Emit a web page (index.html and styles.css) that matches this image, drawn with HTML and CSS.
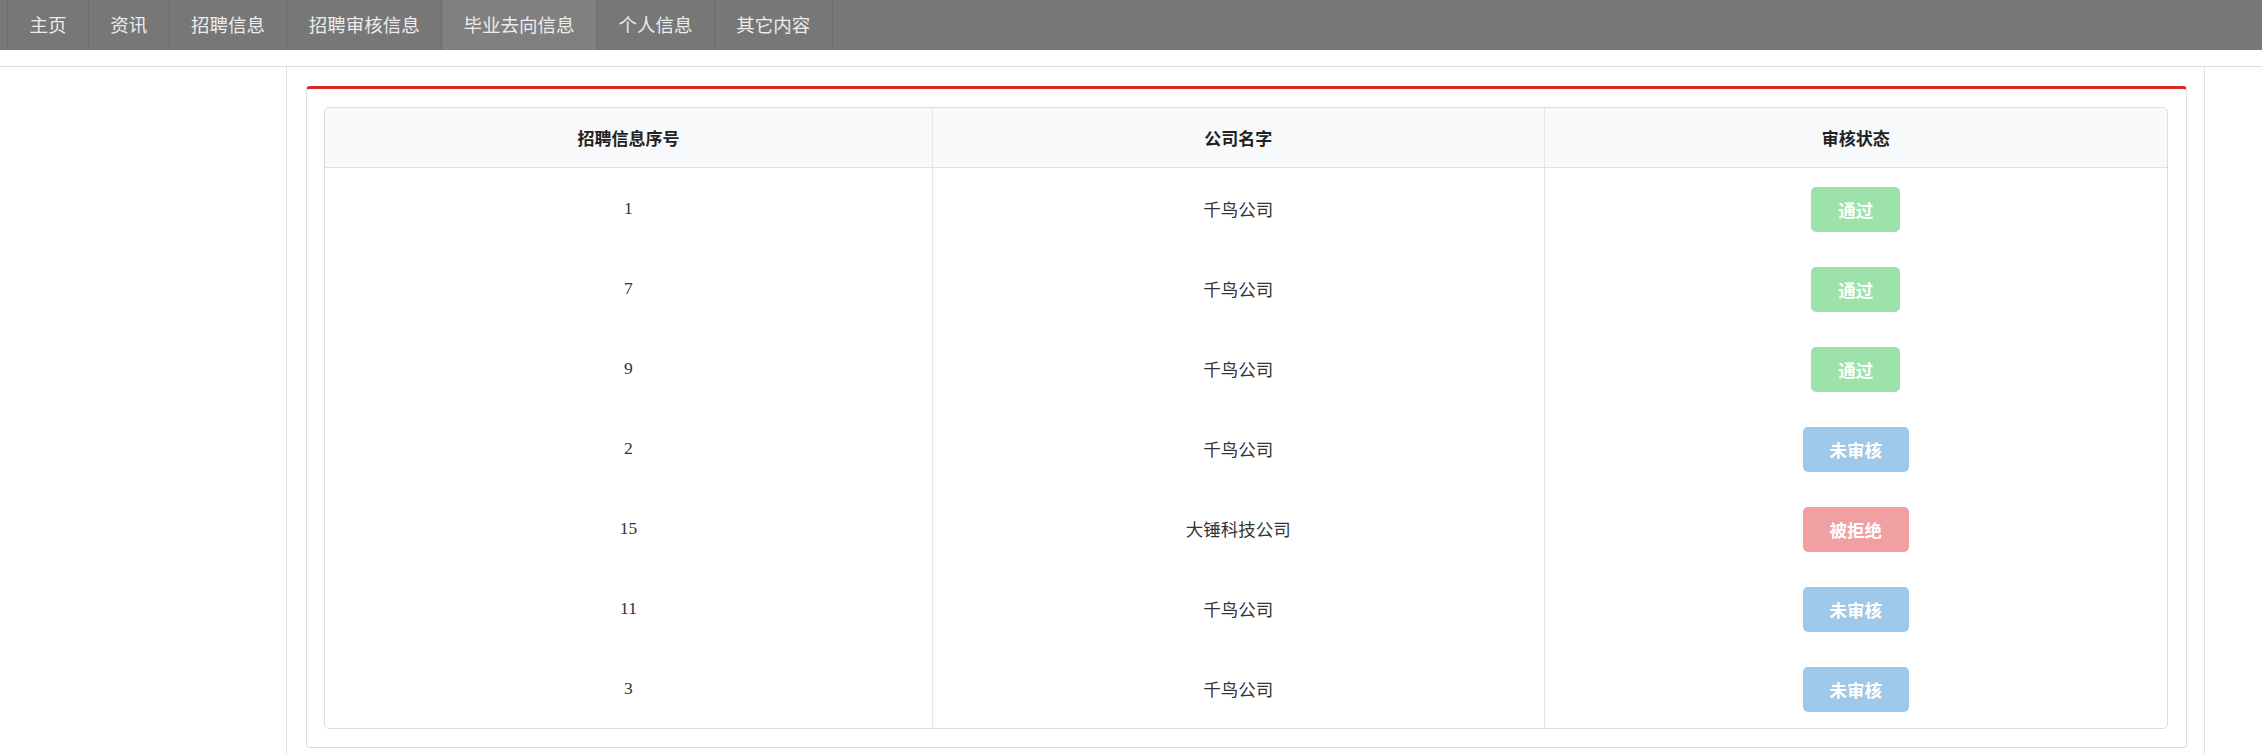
FILE: index.html
```html
<!DOCTYPE html>
<html lang="zh-CN">
<head>
<meta charset="utf-8">
<title>审核状态</title>
<link rel="stylesheet" href="styles.css">
</head>
<body>
<nav class="topnav">
  <ul class="menu">
    <li class="menu-item">主页</li>
    <li class="menu-item">资讯</li>
    <li class="menu-item">招聘信息</li>
    <li class="menu-item">招聘审核信息</li>
    <li class="menu-item active">毕业去向信息</li>
    <li class="menu-item">个人信息</li>
    <li class="menu-item">其它内容</li>
  </ul>
</nav>
<div class="layout">
  <aside class="sidebar"></aside>
  <main class="main">
    <section class="panel">
      <div class="table-wrap">
        <table class="status-table">
          <thead>
            <tr>
              <th class="c1">招聘信息序号</th>
              <th class="c2">公司名字</th>
              <th class="c3">审核状态</th>
            </tr>
          </thead>
          <tbody>
            <tr><td>1</td><td>千鸟公司</td><td><span class="badge ok">通过</span></td></tr>
            <tr><td>7</td><td>千鸟公司</td><td><span class="badge ok">通过</span></td></tr>
            <tr><td>9</td><td>千鸟公司</td><td><span class="badge ok">通过</span></td></tr>
            <tr><td>2</td><td>千鸟公司</td><td><span class="badge wait">未审核</span></td></tr>
            <tr><td>15</td><td>大锤科技公司</td><td><span class="badge no">被拒绝</span></td></tr>
            <tr><td>11</td><td>千鸟公司</td><td><span class="badge wait">未审核</span></td></tr>
            <tr><td>3</td><td>千鸟公司</td><td><span class="badge wait">未审核</span></td></tr>
          </tbody>
        </table>
      </div>
    </section>
  </main>
  <div class="gutter"></div>
</div>
</body>
</html>
```

FILE: styles.css
```css
html, body {
  margin: 0;
  padding: 0;
  background: #ffffff;
}

body {
  font-family: "Liberation Serif", "Noto Sans CJK SC", serif;
  font-size: 17.5px;
  color: #333333;
}

.topnav {
  height: 50px;
  background: #777777;
}

.menu {
  list-style: none;
  margin: 0;
  padding: 0 0 0 7px;
  display: flex;
  height: 50px;
}

.menu-item {
  font-family: "Noto Sans CJK SC", sans-serif;
  font-size: 18.5px;
  color: #ececec;
  line-height: 48px;
  padding: 0 21.4px;
  border-left: 1px solid #6c6c6c;
  white-space: nowrap;
}

.menu-item:last-child {
  border-right: 1px solid #6c6c6c;
}

.menu-item.active {
  background: #808080;
}

.layout {
  margin-top: 16px;
  border-top: 1px solid #dddddd;
  display: flex;
  min-height: 700px;
}

.sidebar {
  width: 286px;
  flex: none;
  border-right: 1px solid #e3e3e3;
}

.main {
  flex: 1;
  border-right: 1px solid #e3e3e3;
  padding: 19px 17px 0 19px;
}

.gutter {
  width: 57px;
  flex: none;
}

.panel {
  border: 1px solid #dddddd;
  border-top: 3px solid #dc2727;
  border-radius: 4px;
  padding: 18px 18px 18px 17px;
}

.table-wrap {
  border: 1px solid #dddddd;
  border-radius: 5px;
  overflow: hidden;
}

.status-table {
  width: 100%;
  border-collapse: collapse;
  table-layout: fixed;
}

.status-table th {
  font-family: "Noto Sans CJK SC", sans-serif;
  font-weight: bold;
  font-size: 17px;
  color: #222222;
  background: #f8f9fa;
  height: 59px;
  border-bottom: 1px solid #dee2e6;
  text-align: center;
  vertical-align: middle;
  padding: 0;
}

.status-table td {
  height: 80px;
  text-align: center;
  vertical-align: middle;
  padding: 0;
  color: #333333;
}

.status-table th + th,
.status-table td + td {
  border-left: 1px solid #e6e6e6;
}

.c1 { width: 32.95%; }
.c2 { width: 33.15%; }
.c3 { width: auto; }

.badge {
  display: inline-block;
  height: 45px;
  line-height: 45px;
  margin-top: 2px;
  padding: 0 27px;
  border-radius: 5px;
  color: #ffffff;
  font-family: "Noto Sans CJK SC", sans-serif;
  font-weight: bold;
  font-size: 17.5px;
  vertical-align: middle;
}

.badge.ok { background: #9ee2ab; }
.badge.wait { background: #9ec9ea; }
.badge.no { background: #f0a0a0; }
```
